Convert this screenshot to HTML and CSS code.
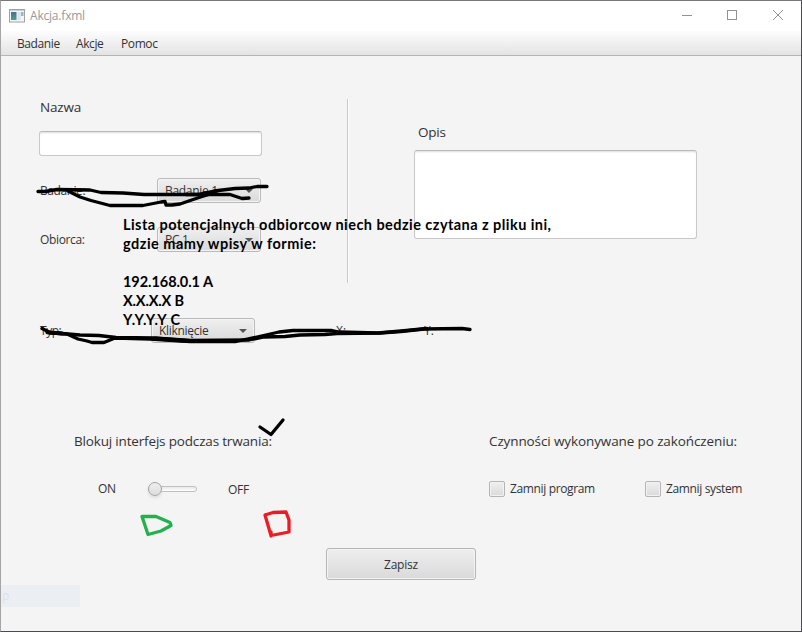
FILE: index.html
```html
<!DOCTYPE html>
<html lang="pl">
<head>
<meta charset="utf-8">
<title>Akcja.fxml</title>
<link rel="stylesheet" href="styles.css">
</head>
<body>
<div class="window">
  <header class="titlebar">
    <svg class="app-icon" width="16" height="14" viewBox="0 0 16 14">
      <defs><linearGradient id="pane" x2="0" y2="1"><stop offset="0" stop-color="#41739a"/><stop offset="1" stop-color="#4da184"/></linearGradient></defs>
      <rect x=".5" y=".5" width="15" height="12.5" fill="#f3f5f7" stroke="#9da2a8"/>
      <path d="M1 1.5h14" stroke="#c9cdd2"/>
      <rect x="2" y="3" width="5.5" height="8" fill="url(#pane)"/>
      <rect x="8.5" y="3" width="3" height="8" fill="#dfe2e5"/>
      <rect x="12" y="3" width="2.5" height="4" fill="#8fb8c4"/>
    </svg>
    <span class="title">Akcja.fxml</span>
    <svg class="controls" width="104" height="12" viewBox="0 0 104 12" fill="none" stroke="#929292">
      <path d="M0 6.5h10"/><rect x="45.5" y="1.5" width="9" height="9"/><path d="M91 1l10 10M101 1l-10 10"/>
    </svg>
  </header>
  <nav class="menu"><span class="m1">Badanie</span><span class="m2">Akcje</span><span class="m3">Pomoc</span></nav>
  <main class="form">
    <section class="upper">
      <div class="left">
        <label class="label name">Nazwa</label>
        <div class="field"></div>
        <div class="row"><span class="caption">Badanie:</span><div class="combo"><span>Badanie 1</span><i></i></div></div>
        <div class="row"><span class="caption recipient">Obiorca:</span><div class="combo"><span>PC 1</span><i></i></div></div>
      </div>
      <div class="separator"></div>
      <div class="right">
        <label class="label">Opis</label>
        <div class="field area"></div>
      </div>
    </section>
    <section class="type-row">
      <span class="caption">Typ:</span><div class="combo"><span class="click">Kliknięcie</span><i></i></div>
      <span class="x">X:</span><span class="y">Y:</span>
    </section>
    <section class="options">
      <div class="lock">
        <h2 class="h-lock">Blokuj interfejs podczas trwania:</h2>
        <div class="switch"><span class="on">ON</span><div class="slider"><b></b></div><span class="off">OFF</span></div>
      </div>
      <div class="after">
        <h2 class="h-after">Czynności wykonywane po zakończeniu:</h2>
        <div class="checks">
          <label class="check"><i></i><span class="c1">Zamnij program</span></label>
          <label class="check"><i></i><span class="c2">Zamnij system</span></label>
        </div>
      </div>
    </section>
    <div class="save">Zapisz</div>
    <div class="ghost">p</div>
  </main>
  <svg class="notes" width="802" height="632" viewBox="0 0 802 632">
    <g fill="none" stroke="#000" stroke-width="3.3" stroke-linecap="round" stroke-linejoin="round">
      <path d="M38 191.500L45 191.500L57 189.500L90 190L101 192.500L123 193L144 194.500L198 194.500L214 191L235 188.500L249 188L257 186.500L267 186.500"/>
      <path d="M68 191L80 197L91 200.500L110 205.500L143 205.500L161 202L165 201.500L166 205L172 205L180 204L199 197.500L212 193.500L217 194"/>
      <path d="M186 194.500L230 194.500L242 198.500L249 198"/>
      <path d="M42 328.500L50 332.500L80 335L99 335.500L116 337.500L154 338L190 340.500L249 340L264 337L285 336.500L300 335L325 334.500L337 333.500L380 333L401 331.500L424 329L462 328.500L470 329.500"/>
      <path d="M47 332.500L67 334L78 339L87 341L92 342.500L104 342.500L115 338L150 339L190 341.500L236 341.500L257 337L279 332L293 330.500L332 330.500L339 332L378 333L401 331L427 328.500"/>
      <path d="M50 332.500L62 333.500M155 338.500L190 341L235 341" stroke-width="4"/>
      <path d="M260 427L271 434.500L283 420"/>
      <path d="M142 516.500L156 516.500L163 519.500L170 522.500L171 525.500L161 531L148 534.500L142 516.500" stroke="#22b14c"/>
      <path d="M265 515L273 512.500L286 512L289 520L289 532L271 535.500L265 515M271 532L271 536" stroke="#ed1c24"/>
    </g>
    <g class="note-text">
      <text x="123" y="230" textLength="428">Lista potencjalnych odbiorcow niech bedzie czytana z pliku ini,</text>
      <text x="123" y="249" textLength="193">gdzie mamy wpisy w formie:</text>
      <text x="123" y="287" textLength="90">192.168.0.1 A</text>
      <text x="123" y="306" textLength="61">X.X.X.X B</text>
      <text x="123" y="325" textLength="57">Y.Y.Y.Y C</text>
    </g>
  </svg>
</div>
</body>
</html>
```
FILE: styles.css
```css
* { box-sizing: border-box; }
body { margin: 0; font: 12px/18px "Open Sans", "Noto Sans", sans-serif; color: #333; }
span, label, h2 { white-space: nowrap; }
.window { position: relative; width: 802px; height: 632px; background: #f4f4f4; border: 1px solid #4c4c50; border-left-color: #a5a5a8; border-top-color: #77777a; overflow: hidden; }
.titlebar { display: flex; align-items: center; height: 30px; padding: 0 15px 0 8px; background: #fff; }
.title { margin-left: 5px; color: #999; letter-spacing: -.2px; }
.controls { margin: -2px 0 0 auto; }
.menu { display: flex; gap: 17px; height: 25px; padding: 4px 16px 0; border-bottom: 1px solid #b5b5b5; background: linear-gradient(#fdfdfd, #e3e3e3); }
.menu span { letter-spacing: -.4px; }
.m1 { width: 42px; }
.m2 { width: 28px; }
.form { padding-top: 41px; }
.upper { display: flex; height: 187px; padding-left: 38px; }
.left { width: 223px; }
.label { display: block; font-size: 13.500px; line-height: 20px; letter-spacing: -.2px; padding-left: 1px; }
.field { height: 25px; margin-top: 14px; background: #fff; border: 1px solid #c8c8c8; border-top-color: #b8b8b8; border-radius: 3px; box-shadow: inset 0 2px 2px -1px #ddd; }
.row { display: flex; align-items: center; height: 25px; margin-top: 24px; }
.row:nth-of-type(2) { margin-top: 22px; }
.caption { width: 118px; padding-left: 1px; letter-spacing: -.45px; }
.recipient { letter-spacing: -.35px; padding-top: 1px; }
.combo { display: flex; align-items: center; width: 104px; height: 25px; padding: 0 7px; border: 1px solid #bababa; border-radius: 3px; background: linear-gradient(#efefef, #dadada); box-shadow: inset 0 0 0 1px #f4f4f4; }
.combo span { flex: 1; letter-spacing: -.3px; }
.combo i { border: 4px solid transparent; border-top-color: #555; border-bottom: 0; margin-top: 1px; }
.separator { width: 1px; height: 184px; margin: 2px 66px 0 85px; background: #c8c8c8; box-shadow: 1px 0 #fff; }
.right { width: 283px; padding-top: 25px; }
.right .label { padding-left: 4px; }
.right .area { height: 89px; margin-top: 8px; }
.type-row { display: flex; align-items: center; height: 25px; margin-top: 34px; padding-left: 38px; }
.type-row .caption { width: 112px; }
.x { width: 88px; margin-left: 81px; }
.options { display: flex; margin-top: 88px; padding-left: 73px; }
.lock { width: 415px; }
h2 { margin: 0; font-size: 13.500px; font-weight: 400; line-height: 20px; }
.h-lock { letter-spacing: -.17px; }
.h-after { letter-spacing: -.11px; }
.switch { display: flex; align-items: center; height: 20px; margin-top: 28px; padding-left: 24px; }
.on { width: 50px; letter-spacing: -.3px; }
.slider { display: flex; align-items: center; width: 49px; height: 6px; border: 1px solid #c0c0c0; border-radius: 3px; background: linear-gradient(#e8e8e8, #fff); }
.slider b { width: 14px; height: 14px; flex: none; margin-left: -1px; border: 1px solid #a5a5a5; border-radius: 50%; background: linear-gradient(#eee, #ddd); box-shadow: 0 2px 3px #ddd; }
.off { margin-left: 31px; letter-spacing: -.3px; padding-top: 1px; }
.checks { display: flex; margin-top: 28px; }
.check { display: flex; align-items: center; width: 156px; height: 20px; }
.check i { width: 16px; height: 16px; margin-right: 5px; border: 1px solid #b5b5b5; border-radius: 2px; background: linear-gradient(#efefef, #dadada); box-shadow: inset 0 0 0 1px #f2f2f2; }
.check span { letter-spacing: -.36px; }
.save { width: 150px; height: 32px; margin: 49px 0 0 325px; border: 1px solid #b5b5b5; border-radius: 3px; background: linear-gradient(#efefef, #d9d9d9); box-shadow: inset 0 0 0 1px #f4f4f4; text-align: center; line-height: 32px; letter-spacing: -.2px; }
.ghost { width: 79px; height: 22px; margin-top: 5px; padding-left: 1px; background: #ebeff4; color: #dde1e5; line-height: 22px; }
.notes { position: absolute; top: -1px; left: -1px; }
.note-text { font: 700 14.500px Lato, sans-serif; fill: #000; }
```
